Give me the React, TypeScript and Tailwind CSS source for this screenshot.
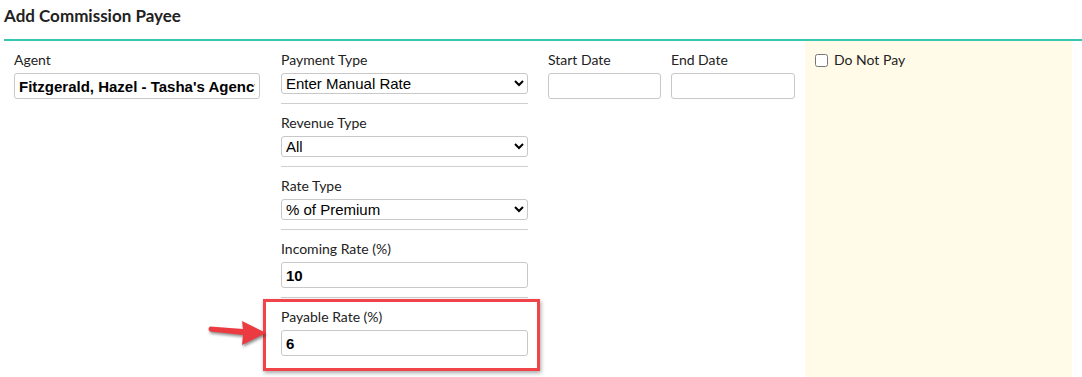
import React from 'react';

const label = 'block text-[14px] leading-[18px] text-[#222] mb-[4px]';
const textInput =
  'block w-full h-[26px] border border-[#c8c8c8] rounded-[3px] bg-white px-[4px] text-[15px] font-bold text-black outline-none';
const selectBox =
  'block w-full h-[21px] border border-[#c8c8c8] rounded-[3px] bg-white pl-0 text-[15px] text-black';

const inputFont = { fontFamily: '"Liberation Sans", Arial, sans-serif' };

type SelectRow = { label: string; value: string; options: string[] };

const SELECT_ROWS: SelectRow[] = [
  { label: 'Payment Type', value: 'Enter Manual Rate', options: ['Enter Manual Rate', 'Use Schedule'] },
  { label: 'Revenue Type', value: 'All', options: ['All', 'Commission', 'Override'] },
  { label: 'Rate Type', value: '% of Premium', options: ['% of Premium', 'Flat Amount'] },
];

function Arrow() {
  return (
    <svg
      className="absolute left-[-81px] top-[16px] drop-shadow-[1px_2px_1.5px_rgba(0,0,0,0.45)]"
      width="75"
      height="40"
      viewBox="0 0 75 40"
    >
      <path
        d="M10 12.5 Q7 15 10 17.5 L43 21 L42 31 L66 19 L42 7 L43 15 Z"
        fill="#ec3b40"
        strokeLinejoin="round"
      />
    </svg>
  );
}

export default function App() {
  return (
    <div className="w-[1082px] h-[377px] overflow-hidden bg-white pl-[4px]" style={{ fontFamily: 'Lato, "Noto Sans", sans-serif' }}>
      <div className="h-[39px] pt-[5px]">
        <h1 className="text-[17px] leading-[22px] font-bold text-[#222]">Add Commission Payee</h1>
      </div>
      <div className="h-[2px] bg-[#38c7ae]" />

      <div className="flex h-[336px]">
        {/* Agent */}
        <div className="w-[246px] ml-[10px] pt-[10px]">
          <label className={label}>Agent</label>
          <input
            className={textInput + ' overflow-hidden'}
            style={inputFont}
            defaultValue="Fitzgerald, Hazel - Tasha's Agency"
          />
        </div>

        {/* Payment details */}
        <div className="w-[247px] ml-[21px]">
          {SELECT_ROWS.map((row) => (
            <div key={row.label} className="pt-[10px] pb-[9px] border-b border-[#cfcfcf]">
              <label className={label}>{row.label}</label>
              <select className={selectBox} style={inputFont} defaultValue={row.value}>
                {row.options.map((o) => (
                  <option key={o}>{o}</option>
                ))}
              </select>
            </div>
          ))}
          <div className="pt-[10px] pb-[9px] border-b border-[#cfcfcf]">
            <label className={label}>Incoming Rate (%)</label>
            <input className={textInput} style={inputFont} defaultValue="10" />
          </div>
          <div className="relative pt-[10px]">
            <label className={label}>Payable Rate (%)</label>
            <input className={textInput} style={inputFont} defaultValue="6" />
            <div className="absolute left-[-18px] top-[1px] w-[277px] h-[72px] border-[3px] border-[#f0444a] shadow-[1px_2px_4px_rgba(0,0,0,0.35)] pointer-events-none" />
            <Arrow />
          </div>
        </div>

        {/* Dates */}
        <div className="w-[113px] ml-[20px] pt-[10px]">
          <label className={label}>Start Date</label>
          <input className={textInput} style={inputFont} />
        </div>
        <div className="w-[124px] ml-[10px] pt-[10px]">
          <label className={label}>End Date</label>
          <input className={textInput} style={inputFont} />
        </div>

        {/* Do not pay panel */}
        <div className="w-[267px] ml-[10px] bg-[#fffbe8] pt-[10px] pl-[10px]">
          <label className="flex items-center gap-[6px] text-[14px] leading-[18px] text-[#222]">
            <input type="checkbox" className="w-[13px] h-[13px] m-0" />
            Do Not Pay
          </label>
        </div>
      </div>
    </div>
  );
}
